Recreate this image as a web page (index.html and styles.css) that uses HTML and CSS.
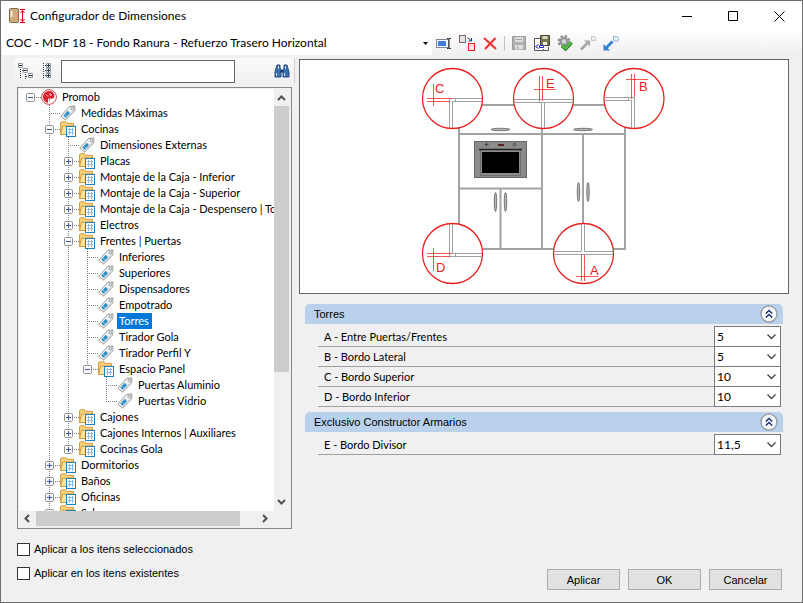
FILE: index.html
```html
<!DOCTYPE html>
<html lang="es">
<head>
  <meta charset="UTF-8" />
  <meta name="viewport" content="width=device-width, initial-scale=1.0"/>
  <title>Configurador de Dimensiones</title>
  <link rel="stylesheet" href="styles.css">
</head>
<body>

  <!-- shared icons -->
  <svg class="defs" width="0" height="0" aria-hidden="true">
    <symbol id="folder" viewBox="0 0 16 16">
      <path d="M.6 13.5V1.8l.8-1h4.2l1 1.5h6.8v3" fill="#f7d283" stroke="#d29a3a"/>
      <path d="M.6 13.5 2.8 5h11.6v8.5z" fill="#fde3a0" stroke="#d29a3a"/>
      <rect x="6.5" y="5.5" width="9" height="10" fill="#fff" stroke="#1c82bd"/>
      <path d="M8 8.5h6M8 11.5h6M9.5 7v7M12.5 7v7" stroke="#8fb9df" fill="none"/>
    </symbol>
    <symbol id="tag" viewBox="0 0 16 16">
      <path d="M.7 11.2 9.5 1.5 14.8.8V5.8L5.5 15.2z" fill="#f1f1f1" stroke="#999b9e"/>
      <path d="M5 13.8 13.8 5.2V2" fill="none" stroke="#cfd1d3"/>
      <path d="m3.3 10.5 4.5-4.7 2.200 2.400-4.500 4.600z" fill="#2e8fca"/>
      <path d="m5 9 2.200 2.400" stroke="#7cc0e6"/>
      <circle cx="12.300" cy="3.500" r="1.300" fill="#fff" stroke="#8d8f92"/>
    </symbol>
    <symbol id="logo" viewBox="0 0 16 16">
      <circle cx="8" cy="8" r="7.400" fill="#fff" stroke="#d2474d"/>
      <path d="M9 2C5 1.500 2 4.500 2 8c0 2.500 1.500 5 5 6V9.500h1.500V13c1-.8.300-2.500.5-3.500 1.500.3 3 .2 3.500-.6.300-.8 1-1.400 1-2C13.500 4.500 11.500 2.300 9 2z" fill="#d8202c"/>
      <path d="M5 5.500 7 7.500M9 4v2.500l2-1" stroke="#f7c4c6" fill="none"/>
    </symbol>
    <symbol id="minus" viewBox="0 0 9 9">
      <rect x=".5" y=".5" width="8" height="8" rx="1" fill="#f7f7f7" stroke="#919191"/>
      <path d="M2 4.500h5" stroke="#3b57a5"/>
    </symbol>
    <symbol id="plus" viewBox="0 0 9 9">
      <rect x=".5" y=".5" width="8" height="8" rx="1" fill="#f7f7f7" stroke="#919191"/>
      <path d="M2 4.500h5M4.500 2v5" stroke="#3b57a5"/>
    </symbol>
    <symbol id="chevrons" viewBox="0 0 18 18">
      <circle cx="9" cy="9" r="8" fill="#f8f9fb" stroke="#9a9fa9" stroke-width="1.500"/>
      <path d="m5.800 8.500 3.200-3 3.200 3M5.800 12.500l3.200-3 3.200 3" fill="none" stroke="#1d2f6b" stroke-width="1.500"/>
    </symbol>
  </svg>

  <div class="window">
    <header class="titlebar">
      <svg class="app-icon" width="17" height="16" viewBox="0 0 17 16">
        <rect x=".5" y=".5" width="9" height="14" rx="1" fill="#cfac80" stroke="#84694a"/>
        <path d="M2.500 3v6" stroke="#f5eadb" stroke-width="2"/>
        <path d="M11 1.500h5M11 14.500h5M13.500 2v12M11.500 5l2-2.500 2 2.500M11.500 11l2 2.500 2-2.500" fill="none" stroke="#e2001a"/>
      </svg>
      <h1>Configurador de Dimensiones</h1>
      <div class="window-buttons">
        <button aria-label="Minimizar"><svg width="11" height="11"><path d="M0 5.500h10" stroke="#000"/></svg></button>
        <button aria-label="Maximizar"><svg width="11" height="11"><path d="M.5.500h9v9h-9z" fill="none" stroke="#000"/></svg></button>
        <button aria-label="Cerrar"><svg width="11" height="11"><path d="m.5.500 10 10m0-10-10 10" stroke="#000"/></svg></button>
      </div>
    </header>

    <div class="toolbar">
      <select class="profile" aria-label="Perfil">
        <option>COC - MDF 18 - Fondo Ranura - Refuerzo Trasero Horizontal</option>
      </select>
      <button aria-label="Renombrar">
        <svg width="16" height="16" viewBox="0 0 16 16">
          <rect x=".5" y="4.500" width="12" height="8" fill="#fff" stroke="#7d8794"/>
          <rect x="2" y="6" width="8" height="5" fill="#3f80de"/>
          <path d="M11 3.500h1.500l.5.500.5-.5H15M13 4v9M11 13.500h1.500l.5-.5.5.5H15" fill="none" stroke="#222"/>
        </svg>
      </button>
      <button aria-label="Duplicar">
        <svg width="16" height="16" viewBox="0 0 16 16">
          <rect x=".5" y=".5" width="6" height="7" fill="#e6e0e0" stroke="#77696b"/>
          <rect x="9.500" y="8.500" width="6" height="7" fill="#f2e5e5" stroke="#f01818"/>
          <path d="m8.500 2.500 3.500 3M12.500 3v3h-3" fill="none" stroke="#1c3a7e"/>
        </svg>
      </button>
      <button aria-label="Eliminar">
        <svg width="16" height="16" viewBox="0 0 16 16"><path d="m2 3 12 11M13.500 3 3 14" fill="none" stroke="#f2343a" stroke-width="2.200"/></svg>
      </button>
      <span class="separator"></span>
      <button aria-label="Guardar">
        <svg width="16" height="16" viewBox="0 0 16 16">
          <path d="M1.500 1.500h13v13h-13z" fill="#b0b0b0" stroke="#9d9d9d"/>
          <path d="M4 2h8v5H4zM4 10h8v4.500H4z" fill="#dedede"/>
          <path d="M5 4.500h6M6.500 11v3" stroke="#a5a5a5"/>
        </svg>
      </button>
      <button aria-label="Guardar en base">
        <svg width="16" height="16" viewBox="0 0 16 16">
          <path d="M.5 3.500h9v12h-9z" fill="#fff" stroke="#555"/>
          <path d="M6.500.5h9v10h-9z" fill="#77724f" stroke="#4a4732"/>
          <path d="M8.500 1h5v3h-5z" fill="#d8d6c4"/>
          <path d="M9 7h4v3H9z" fill="#f1f1ea"/>
          <path d="M2 10h8v4H2z" fill="#fff"/>
          <path d="M4.500 9.500 1.500 11.500l3 2M5.500 10.500h4v2h-4z" fill="none" stroke="#1620c8"/>
          <path d="M10 15.500h4.500V12" fill="none" stroke="#555"/>
        </svg>
      </button>
      <button aria-label="Validar">
        <svg width="16" height="16" viewBox="0 0 16 16">
          <circle cx="7" cy="6.500" r="5.500" fill="none" stroke="#8b8f92" stroke-width="2" stroke-dasharray="2.500 1.820"/>
          <circle cx="7" cy="6.500" r="3.500" fill="#d3d5d6" stroke="#94989b" stroke-width="2.500"/>
          <path d="m5 10.500 3.500 3.500 6-6.500" fill="none" stroke="#23801d" stroke-width="3.500"/>
          <path d="m5 10.200 3.500 3.500 6-6.500" fill="none" stroke="#5fc44f" stroke-width="1.800"/>
        </svg>
      </button>
      <button aria-label="Exportar">
        <svg width="16" height="16" viewBox="0 0 16 16">
          <path d="M11.500 1.500h3l1 1v3h-4z" fill="#eee" stroke="#c4c4c4"/>
          <path d="m1 14.500 6-6" stroke="#a7a7a7" stroke-width="2.800"/><path d="M4 5.500h6v6z" fill="#a7a7a7"/>
        </svg>
      </button>
      <button aria-label="Importar">
        <svg width="16" height="16" viewBox="0 0 16 16">
          <path d="M10.500 1.500h4l1 1v3.500h-5z" fill="#e4edf8" stroke="#9db6da"/>
          <path d="m9.500 6.500-6 6" stroke="#3581d0" stroke-width="2.800"/><path d="M.5 9v6.500H7z" fill="#3581d0"/>
        </svg>
      </button>
    </div>

    <main>
      <section class="left">
        <div class="search">
          <button aria-label="Contraer todo">
            <svg width="16" height="16" viewBox="0 0 16 16">
              <path d="M3.500 4v12M8.500 9v7M5 7.500h2M9 13.500h2" fill="none" stroke="#333" stroke-dasharray="1 1"/>
              <path d="M1.500.5h4v4h-4zM6.500 5.500h4v4h-4zM11.500 10.500h4v4h-4z" fill="#fff" stroke="#8a99aa"/>
              <path d="M2 2.500h3M7 7.500h3M12 12.500h3" stroke="#333"/>
            </svg>
          </button>
          <button aria-label="Expandir todo">
            <svg width="16" height="16" viewBox="0 0 16 16">
              <path d="M4.500 0v16M6 2.500h2M6 7.500h2M6 12.500h2" stroke="#333" stroke-dasharray="1 1"/>
              <path d="M7.500.5h4v4h-4zM7.500 5.500h4v4h-4zM7.500 10.500h4v4h-4z" fill="#fff" stroke="#8a99aa"/>
              <path d="M8 2.500h3M8 7.500h3M8 12.500h3M9.500 1v3M9.500 6v3M9.500 11v3" stroke="#333"/>
            </svg>
          </button>
          <input type="text" aria-label="Buscar">
          <button class="find" aria-label="Buscar">
            <svg width="16" height="14" viewBox="0 0 16 14">
              <path d="M3 1h3v3l1 1.500V13H1V8zM13 1h-3v3L9 5.500V13h6V8z" fill="#3d6eae" stroke="#234a83"/>
              <path d="M6.500 6h3v2.500h-3z" fill="#1d3c70"/>
              <path d="M4.500 2v3M11.500 2v3M2.500 9v3M10.500 9v3" stroke="#c5dcf3"/>
            </svg>
          </button>
        </div>

        <div class="tree-box">
          <div class="tree-view">
            <ul class="tree">
              <li><div class="row"><svg class="toggle"><use href="#minus"/></svg><svg class="icon"><use href="#logo"/></svg><span class="label">Promob</span></div>
                <ul>
                  <li><div class="row"><svg class="icon"><use href="#tag"/></svg><span class="label">Medidas Máximas</span></div></li>
                  <li><div class="row"><svg class="toggle"><use href="#minus"/></svg><svg class="icon"><use href="#folder"/></svg><span class="label">Cocinas</span></div>
                    <ul>
                      <li><div class="row"><svg class="icon"><use href="#tag"/></svg><span class="label">Dimensiones Externas</span></div></li>
                      <li><div class="row"><svg class="toggle"><use href="#plus"/></svg><svg class="icon"><use href="#folder"/></svg><span class="label">Placas</span></div></li>
                      <li><div class="row"><svg class="toggle"><use href="#plus"/></svg><svg class="icon"><use href="#folder"/></svg><span class="label">Montaje de la Caja - Inferior</span></div></li>
                      <li><div class="row"><svg class="toggle"><use href="#plus"/></svg><svg class="icon"><use href="#folder"/></svg><span class="label">Montaje de la Caja - Superior</span></div></li>
                      <li><div class="row"><svg class="toggle"><use href="#plus"/></svg><svg class="icon"><use href="#folder"/></svg><span class="label">Montaje de la Caja - Despensero | Torres</span></div></li>
                      <li><div class="row"><svg class="toggle"><use href="#plus"/></svg><svg class="icon"><use href="#folder"/></svg><span class="label">Electros</span></div></li>
                      <li><div class="row"><svg class="toggle"><use href="#minus"/></svg><svg class="icon"><use href="#folder"/></svg><span class="label">Frentes | Puertas</span></div>
                        <ul>
                          <li><div class="row"><svg class="icon"><use href="#tag"/></svg><span class="label">Inferiores</span></div></li>
                          <li><div class="row"><svg class="icon"><use href="#tag"/></svg><span class="label">Superiores</span></div></li>
                          <li><div class="row"><svg class="icon"><use href="#tag"/></svg><span class="label">Dispensadores</span></div></li>
                          <li><div class="row"><svg class="icon"><use href="#tag"/></svg><span class="label">Empotrado</span></div></li>
                          <li><div class="row"><svg class="icon"><use href="#tag"/></svg><span class="label selected">Torres</span></div></li>
                          <li><div class="row"><svg class="icon"><use href="#tag"/></svg><span class="label">Tirador Gola</span></div></li>
                          <li><div class="row"><svg class="icon"><use href="#tag"/></svg><span class="label">Tirador Perfil Y</span></div></li>
                          <li><div class="row"><svg class="toggle"><use href="#minus"/></svg><svg class="icon"><use href="#folder"/></svg><span class="label">Espacio Panel</span></div>
                            <ul>
                              <li><div class="row"><svg class="icon"><use href="#tag"/></svg><span class="label">Puertas Aluminio</span></div></li>
                              <li><div class="row"><svg class="icon"><use href="#tag"/></svg><span class="label">Puertas Vidrio</span></div></li>
                            </ul>
                          </li>
                        </ul>
                      </li>
                      <li><div class="row"><svg class="toggle"><use href="#plus"/></svg><svg class="icon"><use href="#folder"/></svg><span class="label">Cajones</span></div></li>
                      <li><div class="row"><svg class="toggle"><use href="#plus"/></svg><svg class="icon"><use href="#folder"/></svg><span class="label">Cajones Internos | Auxiliares</span></div></li>
                      <li><div class="row"><svg class="toggle"><use href="#plus"/></svg><svg class="icon"><use href="#folder"/></svg><span class="label">Cocinas Gola</span></div></li>
                    </ul>
                  </li>
                  <li><div class="row"><svg class="toggle"><use href="#plus"/></svg><svg class="icon"><use href="#folder"/></svg><span class="label">Dormitorios</span></div></li>
                  <li><div class="row"><svg class="toggle"><use href="#plus"/></svg><svg class="icon"><use href="#folder"/></svg><span class="label">Baños</span></div></li>
                  <li><div class="row"><svg class="toggle"><use href="#plus"/></svg><svg class="icon"><use href="#folder"/></svg><span class="label">Oficinas</span></div></li>
                  <li><div class="row"><svg class="toggle"><use href="#plus"/></svg><svg class="icon"><use href="#folder"/></svg><span class="label">Salas</span></div></li>
                </ul>
              </li>
            </ul>
          </div>
          <div class="vscroll">
            <svg width="15" height="17"><path d="m4 11 3.500-3.500L11 11" fill="none" stroke="#505050" stroke-width="2"/></svg>
            <div class="thumb"></div>
            <svg width="15" height="17"><path d="m4 6 3.500 3.500L11 6" fill="none" stroke="#505050" stroke-width="2"/></svg>
          </div>
          <div class="hscroll">
            <svg width="17" height="15"><path d="M10 4 6.500 7.500 10 11" fill="none" stroke="#505050" stroke-width="2"/></svg>
            <div class="thumb"></div>
            <svg width="17" height="15"><path d="m6 4 3.500 3.500L6 11" fill="none" stroke="#505050" stroke-width="2"/></svg>
          </div>
        </div>
      </section>

      <section class="right">
        <div class="preview">
          <svg viewBox="300 60 488 233" role="img" aria-label="Torre con puertas y horno">
            <!-- cabinet -->
            <g fill="none" stroke="#a3a3a3" stroke-width="2">
              <path d="M459 105h166v144H459zM459 134h166M542 105v144M459 188.500h83M500.500 188.500V249M583 134v115"/>
            </g>
            <g fill="#b5b5b5" stroke="#777">
              <ellipse cx="500.500" cy="129.500" rx="9.500" ry="1.200"/>
              <ellipse cx="583" cy="129.500" rx="9.500" ry="1.200"/>
              <ellipse cx="495.500" cy="202" rx="1.200" ry="9.500"/>
              <ellipse cx="505.500" cy="202" rx="1.200" ry="9.500"/>
              <ellipse cx="578.500" cy="192" rx="1.200" ry="9.500"/>
              <ellipse cx="588" cy="192" rx="1.200" ry="9.500"/>
            </g>
            <!-- oven -->
            <rect x="474.500" y="141.500" width="52" height="36" fill="#8b8b8b" stroke="#666"/>
            <path d="M480.500 150v25.500h40V150" fill="none" stroke="#6f6f6f"/>
            <path d="M479 149.500h43" stroke="#222" stroke-width="1.500"/>
            <path d="M482 152h37v21h-37z" fill="#000"/>
            <path d="M498 144h6v2h-6z" fill="#5a2222"/>
            <path d="M484.500 144.500h4M486.500 142.500v4" stroke="#444"/>
            <circle cx="514.500" cy="144.500" r="1.300" fill="none" stroke="#444"/>
            <!-- detail circles -->
            <g fill="#fff" stroke="#e82020" stroke-width="1.300">
              <circle cx="452.500" cy="98.500" r="30"/>
              <circle cx="543.500" cy="98.500" r="30"/>
              <circle cx="634" cy="98.500" r="30"/>
              <circle cx="452.500" cy="253.500" r="30"/>
              <circle cx="583.500" cy="253.500" r="30"/>
            </g>
            <g fill="none" stroke="#a0a0a0">
              <path d="M482 98.500h-32.500V128M482 101.500H452.500V128M455.500 98.500v3"/>
              <path d="M514 99.500h59M514 102.500h59M541.500 102v26M544.500 102v26M539.500 99.500v3"/>
              <path d="M604.500 97.500h30V128M604.500 100.500h27V128M628.500 97.500v3"/>
              <path d="M449.500 224v32.500H482M452.500 224v29.500H482M455.500 253.500v3"/>
              <path d="M554 251.500h27.500V224M613 251.500h-28.500V224M554 254.500h59"/>
            </g>
            <g fill="none" stroke="#ee2a2a" stroke-width=".8">
              <path d="M427 98.500h25M427 101.500h23M433.500 84v22"/>
              <path d="M539.500 76v24M542.500 76v25M534 89.500h22"/>
              <path d="M631.500 74v25M634.500 74v23M626 79.500h22"/>
              <path d="M427 253.500h25M427 256.500h23M433.500 248v23"/>
              <path d="M581.500 255v26M584.500 255v26M576 276.500h22"/>
            </g>
            <g class="marks">
              <text x="435" y="93">C</text>
              <text x="546" y="88">E</text>
              <text x="639" y="91">B</text>
              <text x="436" y="272">D</text>
              <text x="590" y="275">A</text>
            </g>
          </svg>
        </div>

        <div class="group">
          <div class="group-title"><h2>Torres</h2><button aria-label="Contraer Torres"><svg width="18" height="18"><use href="#chevrons"/></svg></button></div>
          <div class="fields">
            <div class="field"><label for="dimA">A - Entre Puertas/Frentes</label><select id="dimA"><option>5</option></select></div>
            <div class="field"><label for="dimB">B - Bordo Lateral</label><select id="dimB"><option>5</option></select></div>
            <div class="field"><label for="dimC">C - Bordo Superior</label><select id="dimC"><option>10</option></select></div>
            <div class="field"><label for="dimD">D - Bordo Inferior</label><select id="dimD"><option>10</option></select></div>
          </div>
        </div>
        <div class="group">
          <div class="group-title"><h2>Exclusivo Constructor Armarios</h2><button aria-label="Contraer Exclusivo"><svg width="18" height="18"><use href="#chevrons"/></svg></button></div>
          <div class="fields">
            <div class="field"><label for="dimE">E - Bordo Divisor</label><select id="dimE"><option>11,5</option></select></div>
          </div>
        </div>
      </section>
    </main>

    <footer>
      <div class="checks">
        <label><input type="checkbox"> Aplicar a los itens seleccionados</label>
        <label><input type="checkbox"> Aplicar en los itens existentes</label>
      </div>
      <div class="actions">
        <button>Aplicar</button>
        <button>OK</button>
        <button>Cancelar</button>
      </div>
    </footer>
  </div>

</body>
</html>
```

FILE: styles.css
```css
* {
  box-sizing: border-box;
}

body {
  margin: 0;
  font-family: Lato, "Liberation Sans", sans-serif;
  font-size: 12px;
  line-height: 16px;
  color: #000;
}

button, input, select {
  font: inherit;
  color: inherit;
}

svg {
  display: block;
}

.defs {
  position: absolute;
}

.window {
  display: flex;
  flex-direction: column;
  height: 100vh;
  border: 1px solid #6e6e6e;
  background: #f0f0f0;
}

/* title bar */
.titlebar {
  display: flex;
  align-items: center;
  height: 30px;
  padding-left: 8px;
  background: #fff;
}

.titlebar h1 {
  flex: 1;
  margin: 0 0 0 4px;
  font-size: 12px;
  font-weight: normal;
}

.window-buttons {
  display: flex;
}

.window-buttons button {
  display: flex;
  align-items: center;
  justify-content: center;
  width: 46px;
  height: 30px;
  padding: 0;
  border: none;
  background: none;
}

/* toolbar */
.toolbar {
  display: flex;
  align-items: center;
  height: 24px;
  padding-left: 1px;
  background: linear-gradient(#fdfdfd, #f0f0f0);
}

.toolbar button {
  display: flex;
  align-items: center;
  justify-content: center;
  width: 23px;
  height: 22px;
  padding: 0;
  border: none;
  background: none;
}

.profile {
  width: 430px;
  height: 24px;
  padding: 0 20px 0 4px;
  border: none;
  appearance: none;
  background: #fff url("data:image/svg+xml,%3Csvg xmlns='http://www.w3.org/2000/svg' width='5' height='3'%3E%3Cpath d='M0 0h5L2.5 3z'/%3E%3C/svg%3E") no-repeat right 4px center;
}

.separator {
  width: 1px;
  height: 15px;
  margin: 0 2px 0 3px;
  background: #c3c3c3;
}

/* body */
main {
  display: flex;
  flex: 1;
  gap: 4px;
  min-height: 0;
  padding: 3px 13px 0 13px;
}

.left {
  display: flex;
  flex-direction: column;
  width: 281px;
}

.search {
  display: flex;
  align-items: center;
  height: 26px;
  padding-right: 1px;
  border-right: 1px solid #d0d0d0;
  border-radius: 2px;
  background: linear-gradient(#fafafa, #f0f0f0);
}

.search button {
  display: flex;
  align-items: center;
  justify-content: center;
  width: 22px;
  padding: 0;
  border: none;
  background: none;
}

.search input {
  width: 174px;
  height: 23px;
  margin-left: 3px;
  border: 1px solid #646464;
  background: #fff;
}

.search .find {
  margin-left: auto;
}

.tree-box {
  display: grid;
  grid-template-columns: 1fr 15px;
  grid-template-rows: 1fr 15px;
  flex: 1;
  min-height: 0;
  margin: 3px 3px 0 3px;
  padding: 1px 2px 2px 1px;
  border: 1px solid #828790;
  background: #f0f0f0;
}

.tree-view {
  min-width: 0;
  min-height: 0;
  overflow: hidden;
  background: #fff;
}

.tree, .tree ul {
  margin: 0;
  padding: 0;
  list-style: none;
}

.tree {
  padding-left: 1px;
  font-size: 11px;
}

.tree ul {
  padding-left: 19px;
}

/* dotted guide: down the left side, then across to the icon */
.tree li {
  background:
    repeating-linear-gradient(#808080 0 1px, transparent 1px 2px) 10px 0 / 1px 100% no-repeat,
    repeating-linear-gradient(90deg, #808080 0 1px, transparent 1px 2px) 10px 8px / 12px 1px no-repeat;
}

.tree li:last-child {
  background-size: 1px 8px, 12px 1px;
}

/* the root has nothing above it */
.tree > li:last-child {
  background-size: 0 0, 12px 1px;
}

.row {
  display: flex;
  align-items: center;
  height: 16px;
  padding-left: 21px;
  white-space: nowrap;
}

.toggle {
  flex: none;
  width: 9px;
  height: 9px;
  margin-left: -15px;
  margin-right: 6px;
}

.icon {
  flex: none;
  width: 16px;
  height: 16px;
}

.label {
  margin-left: 3px;
  padding: 0 3px 0 2px;
}

.selected {
  background: #0078d7;
  color: #fff;
}

.vscroll {
  display: flex;
  flex-direction: column;
}

.vscroll .thumb {
  height: 63%;
  margin-bottom: auto;
  background: #cdcdcd;
}

.hscroll {
  display: flex;
}

.hscroll .thumb {
  width: 80%;
  margin-right: auto;
  background: #cdcdcd;
}

/* preview and fields */
.right {
  flex: 1;
  min-width: 0;
}

.preview {
  margin-top: 1px;
  margin-bottom: 10px;
  border: 1px solid #646464;
  background: #fff;
}

.preview svg {
  width: 100%;
}

.marks {
  font-family: "Liberation Sans", sans-serif;
  font-size: 13px;
  fill: #e82020;
}

.group {
  margin: 0 6px 5px;
}

.group-title {
  display: flex;
  align-items: center;
  justify-content: space-between;
  height: 20px;
  padding: 0 5px 0 9px;
  border-radius: 5px 5px 0 0;
  background: #b9d1ea;
}

.group-title h2 {
  margin: 0;
  font-family: "Liberation Sans", sans-serif;
  font-size: 11px;
  font-weight: normal;
}

.group-title button {
  padding: 0;
  border: none;
  background: none;
}

.fields {
  padding: 3px 2px 0 13px;
}

.field {
  display: flex;
  align-items: center;
  height: 20px;
  padding-left: 6px;
  border-bottom: 1px solid #a0a0a0;
  font-size: 11px;
}

.field label {
  flex: 1;
}

.field select {
  width: 67px;
  height: 21px;
  padding: 0 2px;
  border: 1px solid #7a7a7a;
  border-radius: 0;
  appearance: none;
  font-size: 12px;
  background: #fff url("data:image/svg+xml,%3Csvg xmlns='http://www.w3.org/2000/svg' width='9' height='6'%3E%3Cpath d='M.5.5l4 4 4-4' fill='none' stroke='%23444' stroke-width='1.3'/%3E%3C/svg%3E") no-repeat right 4px center;
}

/* footer */
footer {
  display: flex;
  align-items: flex-end;
  justify-content: space-between;
  padding: 12px 20px 12px 16px;
  font-family: "Liberation Sans", sans-serif;
  font-size: 11px;
}

.checks {
  display: flex;
  flex-direction: column;
  gap: 8px;
  padding-bottom: 9px;
}

.checks label {
  display: flex;
  align-items: center;
  gap: 4px;
}

.checks input {
  width: 13px;
  height: 13px;
  margin: 0;
  border: 1px solid #333;
  appearance: none;
  background: #fff;
}

.actions {
  display: flex;
  gap: 8px;
}

.actions button {
  width: 73px;
  height: 21px;
  padding: 0;
  border: 1px solid #adadad;
  background: #e1e1e1;
}
```
